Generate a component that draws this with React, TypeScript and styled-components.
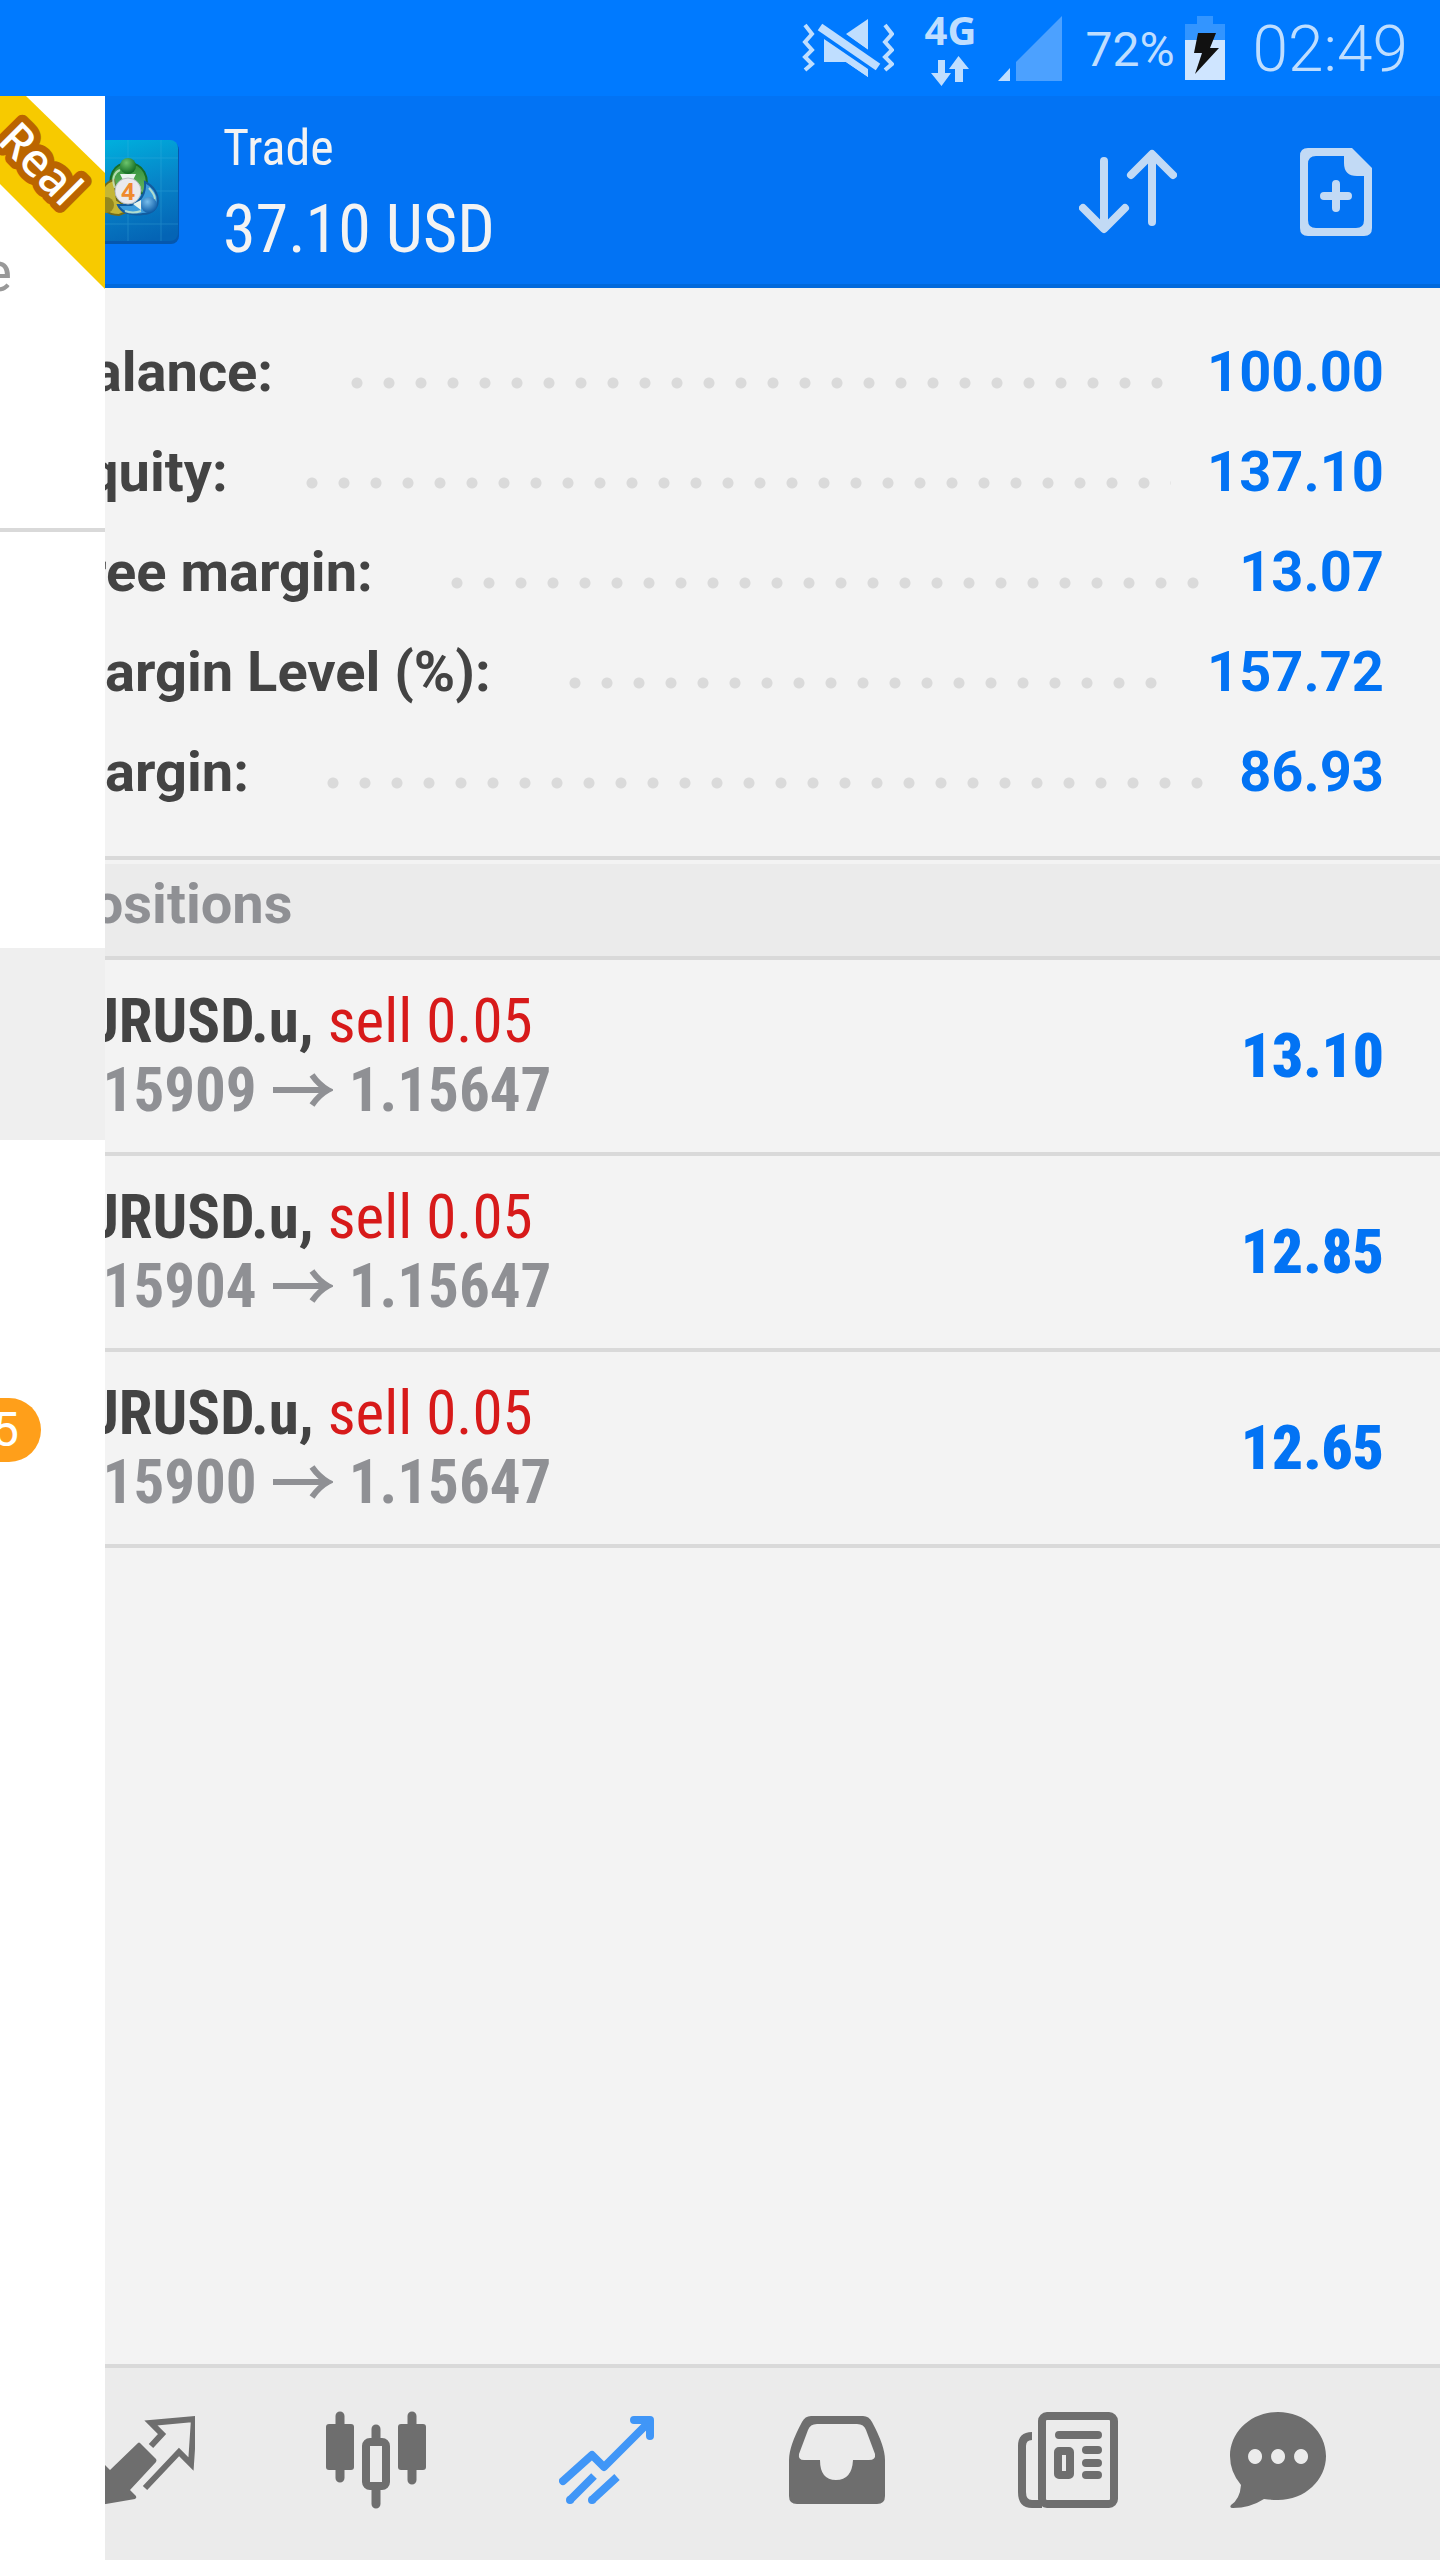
import React from "react";
import styled, { createGlobalStyle } from "styled-components";

const Global = createGlobalStyle`
  *, *::before, *::after { box-sizing: border-box; }
  body { margin: 0; background: #f3f3f3; font-family: Roboto, "Noto Sans", sans-serif; }
  dl, dd, dt, ul, h1, h2, p { margin: 0; padding: 0; }
  ul { list-style: none; }
  button { border: 0; padding: 0; background: none; font: inherit; color: inherit; }
  svg { display: block; flex: none; }
`;

const condensed = `"Roboto Condensed", Roboto, "Noto Sans", sans-serif`;

const Page = styled.div`
  display: flex;
  flex-direction: column;
  min-height: 100vh;
  overflow: hidden;
`;

const StatusBar = styled.div`
  display: flex;
  align-items: center;
  justify-content: flex-end;
  height: 96px;
  padding-right: 32px;
  background: #007aff;
  color: #bfdeff;
`;

const NetworkBadge = styled.div`
  display: flex;
  flex-direction: column;
  align-items: center;
  gap: 6px;
  width: 56px;
  margin: 0 20px 0 28px;
  font: 700 40px/40px "Noto Sans", sans-serif;
`;

const BatteryText = styled.span`
  margin: 0 10px 0 22px;
  padding-top: 4px;
  font-size: 48px;
  line-height: 96px;
`;

const Clock = styled.time`
  margin-left: 28px;
  padding-top: 4px;
  font-size: 64px;
  font-weight: 300;
  line-height: 96px;
`;

const Body = styled.div`
  position: relative;
  display: flex;
  flex: 1;
`;

const Drawer = styled.aside`
  position: absolute;
  inset: 0 auto 0 0;
  z-index: 2;
  width: 105px;
  overflow: hidden;
  background: #fff;
`;

const Account = styled.div`
  position: relative;
  height: 436px;
  padding-top: 140px;
  border-bottom: 4px solid #d9d9d9;
`;

const AccountName = styled.p`
  width: 12px;
  display: flex;
  justify-content: flex-end;
  color: #999;
  font-size: 56px;
  line-height: 72px;
`;

const Ribbon = styled.svg`
  position: absolute;
  top: 0;
  left: 0;
`;

const DrawerItem = styled.div<{ $active?: boolean }>`
  display: flex;
  align-items: center;
  height: 192px;
  padding-top: 4px;
  background: ${(p) => (p.$active ? "#efefef" : "transparent")};
`;

const DrawerList = styled.div`
  display: flex;
  flex-direction: column;
  padding-top: 32px;
`;

const Badge = styled.span`
  display: flex;
  align-items: center;
  justify-content: flex-end;
  width: 41px;
  height: 64px;
  padding-right: 22px;
  border-radius: 0 32px 32px 0;
  background: #ff9f1a;
  color: #fff;
  font-size: 48px;
  line-height: 64px;
`;

const Main = styled.main`
  display: flex;
  flex: 1;
  flex-direction: column;
  min-width: 0;
`;

const Header = styled.header`
  display: flex;
  align-items: center;
  height: 192px;
  padding: 4px 56px 0 77px;
  background: #0273f4;
  border-bottom: 4px solid #0169db;
`;

const Titles = styled.div`
  display: flex;
  flex: 1;
  flex-direction: column;
  gap: 2px;
  margin-left: 44px;
  padding-top: 2px;
  color: #f3f3f3;
  font-family: ${condensed};
`;

const Title = styled.h1`
  font-size: 50px;
  font-weight: 400;
  line-height: 72px;
`;

const Profit = styled.p`
  font-size: 66px;
  line-height: 88px;
`;

const HeaderButton = styled.button`
  display: flex;
  align-items: center;
  justify-content: center;
  width: 96px;
  height: 96px;
  margin-left: 112px;
  color: #c2daf5;
`;

const Summary = styled.dl`
  padding: 34px 56px;
  border-bottom: 4px solid #d9d9d9;
`;

const SummaryRow = styled.div`
  display: flex;
  align-items: center;
  height: 100px;
  font-size: 56px;
  font-weight: 700;
  line-height: 100px;
`;

const Label = styled.dt`
  color: #434343;
  white-space: nowrap;
`;

const Leader = styled.span`
  flex: 1;
  height: 12px;
  margin: 22px 36px 0 78px;
  background: radial-gradient(circle at 6px 6px, #dadada 5px, transparent 6px) 0 0 / 32px 12px repeat-x;
`;

const Value = styled.dd`
  color: #0273f4;
`;

const SectionTitle = styled.h2`
  height: 96px;
  margin-top: 4px;
  padding: 0 56px;
  border-bottom: 4px solid #d9d9d9;
  background: #ebebeb;
  color: #8f9094;
  font-size: 56px;
  line-height: 80px;
`;

const Position = styled.li`
  display: flex;
  align-items: center;
  justify-content: space-between;
  height: 196px;
  padding: 0 56px 0 54px;
  border-bottom: 4px solid #d9d9d9;
  font: 700 61px/69px ${condensed};
`;

const Symbol = styled.p`
  color: #434343;
`;

const Side = styled.span`
  color: #d71a1a;
  font-weight: 400;
`;

const Quote = styled.p`
  display: flex;
  align-items: center;
  gap: 16px;
  color: #8f9094;
`;

const Result = styled.strong`
  color: #0273f4;
`;

const TabBar = styled.nav`
  display: flex;
  height: 196px;
  margin-top: auto;
  padding: 0 26px 8px 30px;
  border-top: 4px solid #d9d9d9;
  background: #ebebeb;
`;

const Tab = styled.button<{ $active?: boolean }>`
  display: flex;
  flex: 1;
  align-items: center;
  justify-content: center;
  color: ${(p) => (p.$active ? "#4096f7" : "#6e6e6e")};
`;

const MuteIcon = () => (
  <svg width="92" height="58" viewBox="0 0 92 58" fill="currentColor" aria-label="Vibrate">
    <path d="M66 0V31L44 15Z" />
    <path d="M22 20V43H44L66 58V50Z" />
    <path d="M18 8 76 48" stroke="#007aff" strokeWidth="17" />
    <path d="M22 20V43H44L66 58V50Z" />
    <path d="M18 8 76 48" stroke="currentColor" strokeWidth="8" />
    <path d="M3 6 10 15 3 23 10 31 3 38 10 45 3 51M83 6 90 15 83 23 90 31 83 38 90 45 83 51" fill="none" stroke="currentColor" strokeWidth="4" />
  </svg>
);

const DataArrows = () => (
  <svg width="40" height="30" viewBox="0 0 40 30" fill="currentColor" aria-hidden="true">
    <path d="M8 4h7v13h6L11.500 30 1 17h7ZM25 26V13h-6L28.500 0 39 13h-6v13Z" />
  </svg>
);

const SignalIcon = () => (
  <svg width="65" height="65" viewBox="0 0 65 65" aria-label="Signal">
    <path d="M12 52V65H0Z" fill="#bfdeff" />
    <path d="M18 65V46L64 0V65Z" fill="#4ca1ff" />
  </svg>
);

const BatteryIcon = () => (
  <svg width="40" height="64" viewBox="0 0 40 64" aria-label="Charging">
    <path d="M12 0H28V8H40V24H0V8H12Z" fill="#3395ff" />
    <path d="M0 24H40V64H0Z" fill="#cfe5ff" />
    <path d="M13 17H31L25 32H34L10 58 17 37H9Z" fill="#111" />
  </svg>
);

const AppLogo = () => (
  <svg width="102" height="104" viewBox="0 0 102 104" aria-label="MetaTrader 4">
    <defs>
      <linearGradient id="tile" x1="0.4" y1="0" x2="0.7" y2="1">
        <stop offset="0" stopColor="#00addc" />
        <stop offset="0.5" stopColor="#0783c8" />
        <stop offset="1" stopColor="#0464b5" />
      </linearGradient>
      <linearGradient id="green" x1="0" y1="0" x2="0" y2="1">
        <stop offset="0" stopColor="#2f8f3a" />
        <stop offset="1" stopColor="#6dbb62" />
      </linearGradient>
      <radialGradient id="head" cx="0.4" cy="0.3" r="0.7">
        <stop offset="0" stopColor="#6cc46c" />
        <stop offset="1" stopColor="#126b22" />
      </radialGradient>
      <radialGradient id="blueHead" cx="0.4" cy="0.3" r="0.7">
        <stop offset="0" stopColor="#77bdec" />
        <stop offset="1" stopColor="#0d5ca6" />
      </radialGradient>
    </defs>
    <rect y="2" width="102" height="102" rx="8" fill="#0557ad" />
    <rect width="101" height="101" rx="8" fill="url(#tile)" />
    <path d="M51 0V101M84 0V101M0 18H101M0 51H101M0 84H101" stroke="#49b8e0" strokeWidth="1" opacity="0.3" />
    <path d="M36 56C29 36 37 23 51 23S75 36 67 56L59 45 43 45Z" fill="url(#green)" stroke="#176d28" strokeWidth="2" />
    <path d="M37 40C19 44 17 75 42 75L54 70 40 60Z" fill="#c4b636" stroke="#716b1a" strokeWidth="2" />
    <path d="M68 42C85 50 86 73 66 74 53 76 44 72 41 65L54 65C64 63 69 52 68 42Z" fill="#3d9cdc" stroke="#125c9f" strokeWidth="2" />
    <path d="M38 48C34 38 38 32 43 30M72 48C79 56 79 60 76 64M48 71Q56 74 64 71" fill="none" stroke="#cdeccb" strokeWidth="2" opacity="0.8" />
    <path d="M43 34H59L55 42H47ZM56 64 64 60V70Z" fill="#e8f4ee" />
    <circle cx="51" cy="26" r="8" fill="url(#head)" />
    <circle cx="29" cy="65" r="8" fill="#94881e" />
    <circle cx="72" cy="65" r="8" fill="url(#blueHead)" />
    <circle cx="51" cy="51" r="13" fill="#e9e9ec" stroke="#b9bec4" />
    <text x="51" y="60" textAnchor="middle" fontFamily="Noto Sans, sans-serif" fontWeight="700" fontSize="24" fill="#ef8a2d">4</text>
  </svg>
);

const SortIcon = () => (
  <svg width="98" height="86" viewBox="0 0 98 86" fill="none" stroke="currentColor" strokeWidth="8" strokeLinecap="round" strokeLinejoin="round" aria-hidden="true">
    <path d="M25 12V79M4 59 25 80 46 59M73 73V6M52 26 73 5 94 26" />
  </svg>
);

const NewOrderIcon = () => (
  <svg width="72" height="88" viewBox="0 0 72 88" fill="currentColor" aria-hidden="true">
    <path fillRule="evenodd" d="M8 0H52L72 20V80Q72 88 64 88H8Q0 88 0 80V8Q0 0 8 0ZM44 8H16Q8 8 8 16V72Q8 80 16 80H56Q64 80 64 72V28H57Q44 28 44 15Z" />
    <path d="M36 36V60M24 48H48" stroke="currentColor" strokeWidth="8" strokeLinecap="round" />
  </svg>
);

const LongArrow = () => (
  <svg width="60" height="36" viewBox="0 0 60 36" fill="none" stroke="currentColor" strokeWidth="6" aria-label="to">
    <path d="M0 17H54M39 2Q46 12 55 17 46 22 39 32" />
  </svg>
);

const QuotesIcon = () => (
  <svg width="100" height="100" viewBox="0 0 100 100" fill="currentColor" aria-hidden="true">
    <path d="M43 33Q44 32 45 33L61 49Q62 50 61 52L35 80 41 86Q42 88 40 89L5 95 6 56Q7 53 10 55L15 60Z" />
    <path d="M56 36 67 24 56 13 99 9 96 54 84 42 50 78" fill="none" stroke="currentColor" strokeWidth="6" />
  </svg>
);

const ChartIcon = () => (
  <svg width="100" height="100" viewBox="0 0 100 100" aria-hidden="true">
    <path d="M14 6V68M86 6V70M50 19V29M50 80V94" stroke="currentColor" strokeWidth="9" strokeLinecap="round" />
    <rect y="14" width="28" height="46" rx="3" fill="currentColor" />
    <rect x="72" y="14" width="28" height="46" rx="3" fill="currentColor" />
    <rect x="40" y="32" width="20" height="44" rx="4" fill="none" stroke="currentColor" strokeWidth="8" />
  </svg>
);

const TradeIcon = () => (
  <svg width="96" height="88" viewBox="0 0 96 88" fill="none" stroke="currentColor" strokeWidth="8" aria-hidden="true">
    <path d="M4 65 33 39 45 51 90 6M75 4H91V20" strokeLinecap="round" strokeLinejoin="round" />
    <path d="M11 84 35 60M33 84 58 61" />
    <path d="M11 84h.1M33 84h.1" strokeLinecap="round" />
  </svg>
);

const InboxIcon = () => (
  <svg width="96" height="88" viewBox="0 0 96 88" fill="currentColor" aria-hidden="true">
    <path fillRule="evenodd" d="M22 0H74Q80 0 83 6 96 30 96 44V80Q96 88 88 88H8Q0 88 0 80V44Q0 30 13 6 16 0 22 0ZM28 8Q21 8 19 14L10 38Q9 44 15 44H31Q31 64 47 64T64 44H80Q87 44 86 38L77 14Q75 8 68 8Z" />
  </svg>
);

const NewsIcon = () => (
  <svg width="100" height="96" viewBox="0 0 100 96" fill="none" stroke="currentColor" aria-hidden="true">
    <rect x="24" y="4" width="72" height="88" rx="5" strokeWidth="8" />
    <path d="M14 24Q4 24 4 34V80Q4 92 14 92H24" strokeWidth="8" />
    <path d="M41 23H80M68 38H80M68 51H80M68 63H80" strokeWidth="8" strokeLinecap="round" />
    <rect x="40" y="39" width="12" height="24" rx="1" strokeWidth="8" />
  </svg>
);

const ChatIcon = () => (
  <svg width="138" height="96" viewBox="0 0 138 96" fill="currentColor" aria-hidden="true">
    <path fillRule="evenodd" d="M48 0C75 0 96 20 96 44S75 88 48 88Q41 88 34 87 20 96 3 96-1 96 1 93 10 87 11 73 0 60 0 44C0 20 21 0 48 0ZM25 37a7 7.500 0 1 0 .1 0M48 37a7 7.500 0 1 0 .1 0M71 37a7 7.500 0 1 0 .1 0Z" />
  </svg>
);

const summary = [
  ["Balance:", "100.00"],
  ["Equity:", "137.10"],
  ["Free margin:", "13.07"],
  ["Margin Level (%):", "157.72"],
  ["Margin:", "86.93"],
];

const positions = [
  { open: "1.15909", result: "13.10" },
  { open: "1.15904", result: "12.85" },
  { open: "1.15900", result: "12.65" },
];

const tabs = [
  { name: "Quotes", Icon: QuotesIcon },
  { name: "Chart", Icon: ChartIcon },
  { name: "Trade", Icon: TradeIcon, active: true },
  { name: "History", Icon: InboxIcon },
  { name: "News", Icon: NewsIcon },
  { name: "Chat", Icon: ChatIcon },
];

export default function App() {
  return (
    <Page>
      <Global />
      <StatusBar>
        <MuteIcon />
        <NetworkBadge>
          4G
          <DataArrows />
        </NetworkBadge>
        <SignalIcon />
        <BatteryText>72%</BatteryText>
        <BatteryIcon />
        <Clock>02:49</Clock>
      </StatusBar>
      <Body>
        <Drawer>
          <Account>
            <AccountName>e</AccountName>
            <Ribbon width="105" height="194" viewBox="0 0 105 194">
              <path d="M0 0H26L105 77V193L0 88Z" fill="#f7ca00" />
              <text
                transform="translate(-4 46) rotate(45)"
                fontFamily="Noto Sans, sans-serif"
                fontWeight="500"
                fontSize="46"
                fill="#fff"
                stroke="#bb6500"
                strokeWidth="14"
                strokeLinejoin="round"
                paintOrder="stroke"
              >
                Real
              </text>
            </Ribbon>
          </Account>
          <DrawerList>
            <DrawerItem />
            <DrawerItem />
            <DrawerItem $active />
            <DrawerItem />
            <DrawerItem>
              <Badge>5</Badge>
            </DrawerItem>
          </DrawerList>
        </Drawer>
        <Main>
          <Header>
            <AppLogo />
            <Titles>
              <Title>Trade</Title>
              <Profit>37.10 USD</Profit>
            </Titles>
            <HeaderButton aria-label="Sort">
              <SortIcon />
            </HeaderButton>
            <HeaderButton aria-label="New order">
              <NewOrderIcon />
            </HeaderButton>
          </Header>
          <Summary>
            {summary.map(([label, value]) => (
              <SummaryRow key={label}>
                <Label>{label}</Label>
                <Leader />
                <Value>{value}</Value>
              </SummaryRow>
            ))}
          </Summary>
          <SectionTitle>Positions</SectionTitle>
          <ul>
            {positions.map((p) => (
              <Position key={p.open}>
                <div>
                  <Symbol>
                    EURUSD.u, <Side>sell 0.05</Side>
                  </Symbol>
                  <Quote>
                    {p.open}
                    <LongArrow />
                    1.15647
                  </Quote>
                </div>
                <Result>{p.result}</Result>
              </Position>
            ))}
          </ul>
          <TabBar>
            {tabs.map(({ name, Icon, active }) => (
              <Tab key={name} aria-label={name} $active={active}>
                <Icon />
              </Tab>
            ))}
          </TabBar>
        </Main>
      </Body>
    </Page>
  );
}
